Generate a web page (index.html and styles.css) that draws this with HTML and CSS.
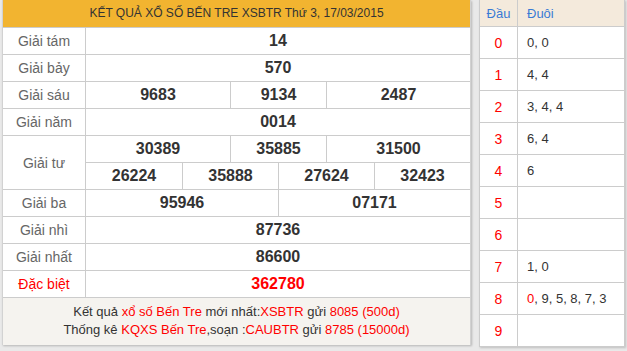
FILE: index.html
```html
<!DOCTYPE html>
<html lang="vi">
<head>
<meta charset="utf-8">
<title>KQXS Bến Tre</title>
<link rel="stylesheet" href="styles.css">
</head>
<body>
<div class="page">
  <div class="result">
    <div class="head">KẾT QUẢ XỔ SỐ BẾN TRE XSBTR Thứ 3, 17/03/2015</div>
    <div class="rows">
      <div class="row"><div class="lbl">Giải tám</div><div class="vals"><div class="line"><div class="v s8">14</div></div></div></div>
      <div class="row"><div class="lbl">Giải bảy</div><div class="vals"><div class="line"><div class="v s8">570</div></div></div></div>
      <div class="row"><div class="lbl">Giải sáu</div><div class="vals"><div class="line"><div class="v s3">9683</div><div class="v s2">9134</div><div class="v s3">2487</div></div></div></div>
      <div class="row"><div class="lbl">Giải năm</div><div class="vals"><div class="line"><div class="v s8">0014</div></div></div></div>
      <div class="row"><div class="lbl">Giải tư</div><div class="vals">
        <div class="line"><div class="v s3">30389</div><div class="v s2">35885</div><div class="v s3">31500</div></div>
        <div class="line"><div class="v s2">26224</div><div class="v s2">35888</div><div class="v s2">27624</div><div class="v s2">32423</div></div>
      </div></div>
      <div class="row"><div class="lbl">Giải ba</div><div class="vals"><div class="line"><div class="v s4">95946</div><div class="v s4">07171</div></div></div></div>
      <div class="row"><div class="lbl">Giải nhì</div><div class="vals"><div class="line"><div class="v s8">87736</div></div></div></div>
      <div class="row"><div class="lbl">Giải nhất</div><div class="vals"><div class="line"><div class="v s8">86600</div></div></div></div>
      <div class="row special"><div class="lbl">Đặc biệt</div><div class="vals"><div class="line"><div class="v s8">362780</div></div></div></div>
    </div>
    <div class="foot">
      <p>Kết quả <span class="red">xổ số Bến Tre</span> mới nhất:<span class="red">XSBTR</span> gửi <span class="red">8085 (500d)</span></p>
      <p>Thống kê <span class="red">KQXS Bến Tre</span>,soạn :<span class="red">CAUBTR</span> gửi <span class="red">8785 (15000d)</span></p>
    </div>
  </div>
  <div class="loto">
    <div class="lrow lhead"><div class="dau">Đầu</div><div class="duoi">Đuôi</div></div>
    <div class="lrow"><div class="dau">0</div><div class="duoi">0, 0</div></div>
    <div class="lrow"><div class="dau">1</div><div class="duoi">4, 4</div></div>
    <div class="lrow"><div class="dau">2</div><div class="duoi">3, 4, 4</div></div>
    <div class="lrow"><div class="dau">3</div><div class="duoi">6, 4</div></div>
    <div class="lrow"><div class="dau">4</div><div class="duoi">6</div></div>
    <div class="lrow"><div class="dau">5</div><div class="duoi"></div></div>
    <div class="lrow"><div class="dau">6</div><div class="duoi"></div></div>
    <div class="lrow"><div class="dau">7</div><div class="duoi">1, 0</div></div>
    <div class="lrow"><div class="dau">8</div><div class="duoi"><span class="red">0</span>, 9, 5, 8, 7, 3</div></div>
    <div class="lrow"><div class="dau">9</div><div class="duoi"></div></div>
  </div>
</div>
</body>
</html>
```

FILE: styles.css
```css
* { box-sizing: border-box; }
html, body { margin: 0; padding: 0; }
body {
  background: #e9e9e9;
  font-family: "Liberation Sans", Arial, sans-serif;
  color: #333;
  width: 627px;
  height: 351px;
  overflow: hidden;
}
.page {
  display: flex;
  align-items: flex-start;
  gap: 8px;
  padding-left: 2px;
}
.result {
  width: 469px;
  background: #fff;
  border-left: 1px solid #d2d2d2;
  border-right: 1px solid #d2d2d2;
  box-shadow: 1px 1px 2px rgba(0,0,0,0.22);
}
.head {
  height: 27px;
  line-height: 27px;
  background: #f2b430;
  text-align: center;
  font-size: 12px;
  color: #333;
}
.rows { border-top: 1px solid #cccccc; }
.row {
  display: flex;
  border-bottom: 1px solid #cccccc;
}
.lbl {
  width: 83px;
  flex: none;
  border-right: 1px solid #cccccc;
  display: flex;
  align-items: center;
  justify-content: center;
  font-size: 14px;
  color: #666;
}
.vals {
  flex: 1;
  display: flex;
  flex-direction: column;
}
.line {
  display: grid;
  grid-template-columns: repeat(8, 1fr);
  height: 26px;
}
.line + .line { border-top: 1px solid #cccccc; height: 27px; }
.v {
  display: flex;
  align-items: center;
  justify-content: center;
  font-size: 16px;
  font-weight: bold;
  color: #333;
}
.v + .v { border-left: 1px solid #cccccc; }
.s2 { grid-column: span 2; }
.s3 { grid-column: span 3; }
.s4 { grid-column: span 4; }
.s8 { grid-column: span 8; }
.special .lbl, .special .v { color: #ff0000; }
.foot {
  background: #f5f3ef;
  padding: 5px 0 6px;
  text-align: center;
  font-size: 13px;
  color: #333;
}
.foot p { margin: 0; line-height: 18px; }
.red { color: #ff0000; }
.loto {
  width: 146px;
  background: #fff;
  border-left: 1px solid #cccccc;
  border-right: 1px solid #cccccc;
  box-shadow: 1px 1px 2px rgba(0,0,0,0.18);
}
.lrow {
  display: flex;
  height: 32px;
  border-bottom: 1px solid #cccccc;
  font-size: 13px;
}
.lrow.lhead {
  height: 27px;
  background: #f4eadc;
  color: #3a7bd5;
}
.dau {
  width: 38px;
  flex: none;
  border-right: 1px solid #cccccc;
  display: flex;
  align-items: center;
  justify-content: center;
  color: #ff0000;
  font-size: 14px;
}
.duoi {
  flex: 1;
  display: flex;
  align-items: center;
  padding-left: 9px;
  color: #333;
}
.lhead .dau, .lhead .duoi { color: #3a7bd5; font-size: 13px; }
```
